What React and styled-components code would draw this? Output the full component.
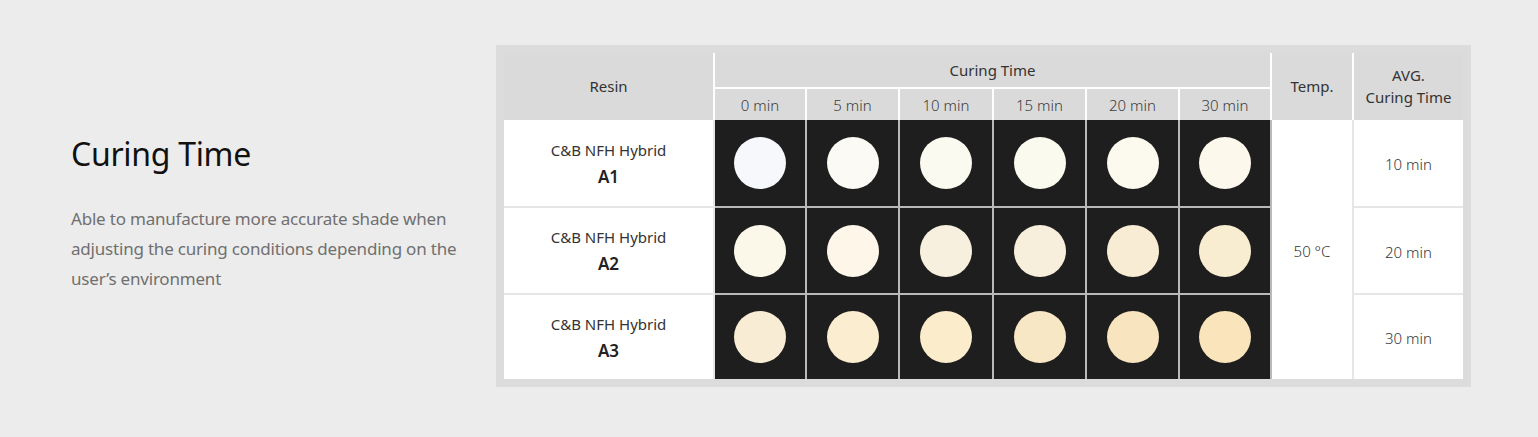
import styled, { createGlobalStyle } from "styled-components";

const times = ["0 min", "5 min", "10 min", "15 min", "20 min", "30 min"];

const rows = [
    { shade: "A1", avg: "10 min", colors: ["#f7f8fc", "#fbfaf5", "#fbfaf0", "#fafaee", "#fcf9ee", "#fcf9ec"] },
    { shade: "A2", avg: "20 min", colors: ["#fbf8ea", "#fdf6e9", "#f8f0df", "#f8eedc", "#f8ecd4", "#f8ecd1"] },
    { shade: "A3", avg: "30 min", colors: ["#f8ecd4", "#fbedd0", "#fbedcb", "#f8e7c4", "#f8e5bf", "#f9e4bc"] },
];

function App() {
    return (
        <Page>
            <GlobalStyle />
            <Content>
                <Intro>
                    <Title>Curing Time</Title>
                    <Desc>
                        Able to manufacture more accurate shade when
                        <br />
                        adjusting the curing conditions depending on the
                        <br />
                        user’s environment
                    </Desc>
                </Intro>
                <Frame>
                    <Grid>
                        <Head style={{ gridColumn: "1", gridRow: "1 / 3" }}>Resin</Head>
                        <Head style={{ gridColumn: "2 / 8", gridRow: "1" }} $bottom>
                            Curing Time
                        </Head>
                        {times.map((t) => (
                            <SubHead key={t}>{t}</SubHead>
                        ))}
                        <Head style={{ gridColumn: "8", gridRow: "1 / 3" }}>Temp.</Head>
                        <Head style={{ gridColumn: "9", gridRow: "1 / 3" }} $end>
                            AVG.
                            <br />
                            Curing Time
                        </Head>

                        {rows.map((r, ri) => (
                            <RowGroup key={r.shade} r={r} ri={ri} />
                        ))}
                        <Cell style={{ gridColumn: "8", gridRow: "3 / 6" }} $noBottom>
                            <Light>50 °C</Light>
                        </Cell>
                    </Grid>
                </Frame>
            </Content>
        </Page>
    );
}

function RowGroup({ r, ri }) {
    const last = ri === rows.length - 1;
    const row = ri + 3;
    return (
        <>
            <Cell style={{ gridColumn: "1", gridRow: row }} $noBottom={last}>
                <Name>C&amp;B NFH Hybrid</Name>
                <Shade>{r.shade}</Shade>
            </Cell>
            {r.colors.map((c, ci) => (
                <Swatch key={ci} style={{ gridColumn: ci + 2, gridRow: row }} $noBottom={last}>
                    <Dot $color={c} />
                </Swatch>
            ))}
            <Cell style={{ gridColumn: "9", gridRow: row }} $noBottom={last} $end>
                <Light>{r.avg}</Light>
            </Cell>
        </>
    );
}

const GlobalStyle = createGlobalStyle`
    * { box-sizing: border-box; }
    body {
        margin: 0;
        background: #ececec;
        font-family: "Noto Sans", "Open Sans", sans-serif;
    }
`;

const Page = styled.div`
    width: 100%;
    height: 437px;
    padding: 45px 0 0 4px;
`;

const Content = styled.div`
    width: 1400px;
    margin: 0 auto;
    display: flex;
    align-items: center;
    justify-content: space-between;
`;

const Intro = styled.div`
    width: 420px;
    padding-bottom: 4px;
`;

const Title = styled.h2`
    margin: 0 0 30px;
    font-size: 32px;
    font-weight: 400;
    line-height: 40px;
    color: #111;
    letter-spacing: -0.3px;
`;

const Desc = styled.p`
    margin: 0;
    font-size: 17px;
    line-height: 30px;
    color: #707070;
    letter-spacing: -0.2px;
`;

const Frame = styled.div`
    width: 975px;
    background: #dcdcdc;
    padding: 8px;
`;

const Grid = styled.div`
    display: grid;
    grid-template-columns: 211px 92px 93px 94px 93px 93px 92px 82px 109px;
    grid-template-rows: 36px 31px 88px 87px 84px;
    color: #333;
    font-size: 15px;
`;

const Head = styled.div`
    background: #dadada;
    display: flex;
    align-items: center;
    justify-content: center;
    text-align: center;
    line-height: 22px;
    border-right: ${(p) => (p.$end ? "0" : "2px solid #fff")};
    border-bottom: ${(p) => (p.$bottom ? "2px solid #fff" : "0")};
    padding-bottom: ${(p) => (p.$bottom ? "0" : "2px")};
`;

const SubHead = styled.div`
    background: #dadada;
    display: flex;
    align-items: center;
    justify-content: center;
    font-weight: 300;
    color: #3c3c3c;
    border-right: 2px solid #fff;
    grid-row: 2;
`;

const Cell = styled.div`
    background: #fff;
    display: flex;
    flex-direction: column;
    align-items: center;
    justify-content: center;
    padding-top: 2px;
    border-right: ${(p) => (p.$end ? "0" : "2px solid #e6e6e6")};
    border-bottom: ${(p) => (p.$noBottom ? "0" : "2px solid #e6e6e6")};
    color: #333;
`;

const Name = styled.div`
    line-height: 22px;
`;

const Shade = styled.div`
    font-size: 17px;
    font-weight: 600;
    line-height: 26px;
    color: #222;
    margin-top: 3px;
`;

const Light = styled.span`
    font-weight: 300;
    color: #363636;
`;

const Swatch = styled.div`
    background: #1e1e1e;
    display: flex;
    align-items: center;
    justify-content: center;
    border-right: 2px solid #b9b9b9;
    border-bottom: ${(p) => (p.$noBottom ? "0" : "2px solid #b9b9b9")};
`;

const Dot = styled.div`
    width: 52px;
    height: 52px;
    border-radius: 50%;
    background: ${(p) => p.$color};
`;

export default App;
